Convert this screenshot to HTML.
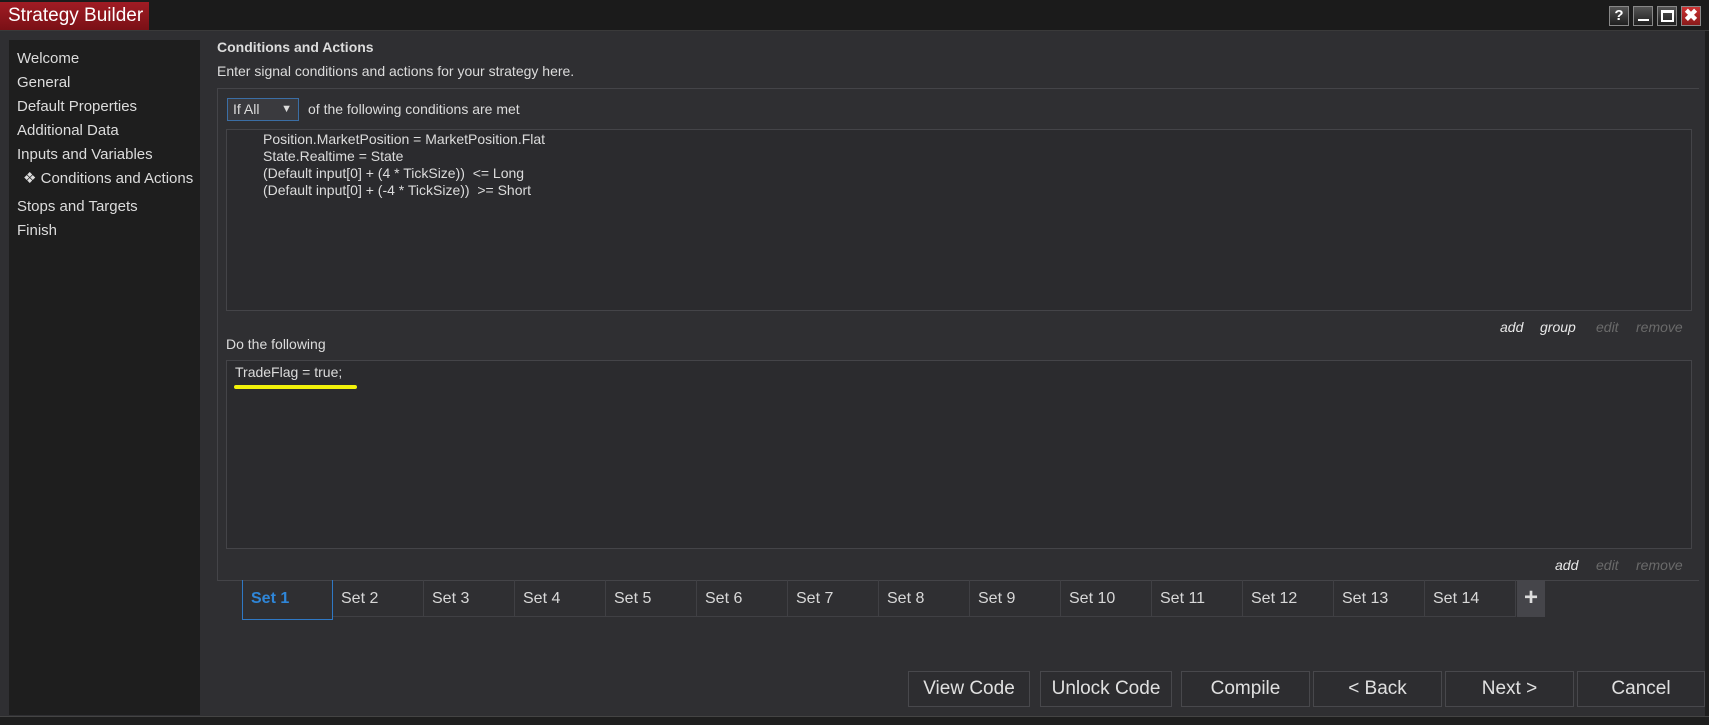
<!DOCTYPE html><html><head><style>
*{margin:0;padding:0;box-sizing:border-box}
body{width:1709px;height:725px;background:#2f2f32;font-family:"Liberation Sans",sans-serif;color:#dcdcdc;position:relative;overflow:hidden;font-size:14px}
.a{position:absolute;white-space:nowrap}
.box{position:absolute;background:#2b2b2e;border:1px solid #444448}
.tab{position:absolute;top:580px;height:37px;width:91px;border-right:1px solid #404044;border-bottom:1px solid #404044;font-size:16px;line-height:37px;padding-left:8px;color:#d8d8d8}
.btn{position:absolute;top:671px;height:36px;border:1px solid #48484c;background:#2d2d30;font-size:19px;line-height:34px;text-align:center;color:#e0e0e0}
.wb{position:absolute;top:6px;width:20px;height:20px;border:1px solid #888;background:linear-gradient(#555,#1e1e1e);color:#fff;font-weight:bold;text-align:center;line-height:18px;font-size:15px}
.it{font-style:italic;font-size:14px}
</style></head><body>
<div class="a" style="left:0;top:0;width:1709px;height:31px;background:#1b1b1b;border-bottom:1px solid #3a3a3a"></div>
<div class="a" style="left:0;top:2px;width:149px;height:28px;background:linear-gradient(#a01c24,#7a1016);color:#fff;font-size:19px;line-height:28px;padding-left:8px">Strategy Builder</div>
<div class="wb" style="left:1609px">?</div>
<div class="wb" style="left:1633px"><div style="position:absolute;left:4px;top:12px;width:11px;height:2px;background:#fff"></div></div>
<div class="wb" style="left:1657px"><div style="position:absolute;left:3px;top:3px;width:13px;height:12px;border:2px solid #fff;border-top-width:3px"></div></div>
<div class="wb" style="left:1681px;background:linear-gradient(#c33,#8a1a1a);font-size:17px">✖</div>
<div class="a" style="left:1705px;top:31px;width:4px;height:690px;background:#1e1e1e"></div>

<div class="a" style="left:9px;top:40px;width:191px;height:675px;background:#1e1e1e"></div>
<div class="a" style="left:17px;top:47px;font-size:15px;line-height:24px">Welcome<br>General<br>Default Properties<br>Additional Data<br>Inputs and Variables</div>
<div class="a" style="left:23px;top:169px;font-size:15px;line-height:20px">❖ Conditions and Actions</div>
<div class="a" style="left:17px;top:195px;font-size:15px;line-height:24px">Stops and Targets<br>Finish</div>

<div class="a" style="left:217px;top:39px;font-weight:bold;font-size:14px">Conditions and Actions</div>
<div class="a" style="left:217px;top:63px;font-size:14px">Enter signal conditions and actions for your strategy here.</div>
<div class="a" style="left:217px;top:88px;width:1482px;height:493px;border:1px solid #444448;border-right:none"></div>
<div class="a" style="left:227px;top:98px;width:72px;height:23px;border:1px solid #3b6ea5;background:#3a3a3e;font-size:14px;line-height:21px;padding-left:5px">If All <span style="position:absolute;right:6px;font-size:11px">▼</span></div>
<div class="a" style="left:308px;top:101px;font-size:14px">of the following conditions are met</div>
<div class="box" style="left:226px;top:129px;width:1466px;height:182px"></div>
<div class="a" style="left:263px;top:131px;font-size:14px;line-height:17px">Position.MarketPosition = MarketPosition.Flat<br>State.Realtime = State<br>(Default input[0] + (4 * TickSize))&nbsp; &lt;= Long<br>(Default input[0] + (-4 * TickSize))&nbsp; &gt;= Short</div>
<div class="a it" style="left:1500px;top:319px;color:#e8e8e8">add</div>
<div class="a it" style="left:1540px;top:319px;color:#e8e8e8">group</div>
<div class="a it" style="left:1596px;top:319px;color:#6a6a6a">edit</div>
<div class="a it" style="left:1636px;top:319px;color:#6a6a6a">remove</div>
<div class="a" style="left:226px;top:336px;font-size:14px">Do the following</div>
<div class="box" style="left:226px;top:360px;width:1466px;height:189px"></div>
<div class="a" style="left:235px;top:364px;font-size:14px">TradeFlag = true;</div>
<div class="a" style="left:234px;top:385px;width:123px;height:4px;border-radius:2px;background:#f2f20a"></div>
<div class="a it" style="left:1555px;top:557px;color:#e8e8e8">add</div>
<div class="a it" style="left:1596px;top:557px;color:#6a6a6a">edit</div>
<div class="a it" style="left:1636px;top:557px;color:#6a6a6a">remove</div>

<div class="tab" style="left:242px;border:1px solid #2f78c4;border-top:none;color:#2f86d8;font-weight:bold;height:40px">Set 1</div>
<div class="tab" style="left:333px">Set 2</div>
<div class="tab" style="left:424px">Set 3</div>
<div class="tab" style="left:515px">Set 4</div>
<div class="tab" style="left:606px">Set 5</div>
<div class="tab" style="left:697px">Set 6</div>
<div class="tab" style="left:788px">Set 7</div>
<div class="tab" style="left:879px">Set 8</div>
<div class="tab" style="left:970px">Set 9</div>
<div class="tab" style="left:1061px">Set 10</div>
<div class="tab" style="left:1152px">Set 11</div>
<div class="tab" style="left:1243px">Set 12</div>
<div class="tab" style="left:1334px">Set 13</div>
<div class="tab" style="left:1425px">Set 14</div>
<div class="a" style="left:1517px;top:580px;width:28px;height:37px;background:#45454a;color:#ddd;font-size:24px;font-weight:bold;text-align:center;line-height:36px">+</div>

<div class="btn" style="left:908px;width:122px">View Code</div>
<div class="btn" style="left:1040px;width:132px">Unlock Code</div>
<div class="btn" style="left:1181px;width:129px">Compile</div>
<div class="btn" style="left:1313px;width:129px">&lt; Back</div>
<div class="btn" style="left:1445px;width:129px">Next &gt;</div>
<div class="btn" style="left:1577px;width:128px">Cancel</div>
<div class="a" style="left:0;top:716px;width:1709px;height:9px;background:#1e1e1e;border-top:1px solid #444"></div>
</body></html>
